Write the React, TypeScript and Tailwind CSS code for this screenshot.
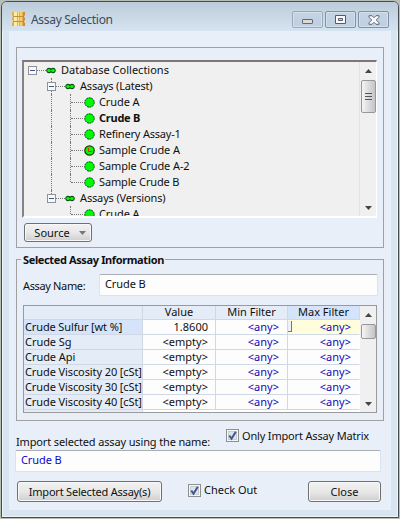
import React from "react";

const dotsH = "border-t border-dotted border-[#777]";
const dotsV = "border-l border-dotted border-[#777]";

function Minus() {
  return (
    <svg width="9" height="9" className="shrink-0" shapeRendering="crispEdges">
      <rect x="0.5" y="0.5" width="8" height="8" fill="#f8f8f8" stroke="#929292" />
      <rect x="2" y="4" width="5" height="1" fill="#3b56a0" />
    </svg>
  );
}

function Pair() {
  return (
    <svg width="10" height="7" viewBox="0 0 10 7" className="shrink-0">
      <circle cx="3" cy="3.5" r="2.3" fill="#00f018" stroke="#003800" strokeWidth="1" />
      <circle cx="7" cy="3.5" r="2.3" fill="#00f018" stroke="#003800" strokeWidth="1" />
      <path d="M4 3.5h2" stroke="#00f018" strokeWidth="1.2" />
    </svg>
  );
}

function Dot({ clock }: { clock?: boolean }) {
  return (
    <svg width="11" height="11" viewBox="0 0 11 11" className="shrink-0">
      <circle
        cx="5.5"
        cy="5.5"
        r="4.7"
        fill="#00fa08"
        stroke={clock ? "#234008" : "#064606"}
        strokeWidth={clock ? 1.3 : 1}
        strokeDasharray={clock ? undefined : "2 .6"}
      />
      {clock && <path d="M4 3h1v3h3v1H4z" fill="#f02800" shapeRendering="crispEdges" />}
    </svg>
  );
}

function Parent({ name, level, last, w }: { name: string; level: number; last?: boolean; w: string }) {
  return (
    <div className={"flex h-4 shrink-0 items-center " + (level ? "pl-[22px]" : "pl-[3px]")}>
      <div className="flex h-4 w-[9px] flex-col items-center">
        <div className={"h-[4px] " + (level ? dotsV : "")} />
        <Minus />
        <div className={"h-[3px] " + (level && !last ? dotsV : "")} />
      </div>
      <div className={"w-[9px] " + dotsH} />
      <Pair />
      <span className={"ml-[5px] " + w}>{name}</span>
    </div>
  );
}

function Leaf({ name, bold, clock, last, end, w }: { name: string; bold?: boolean; clock?: boolean; last?: boolean; end?: boolean; w: string }) {
  return (
    <div className="flex h-4 shrink-0 pl-[26px]">
      <div className={"w-[19px] " + (end ? "" : dotsV)} />
      <div className={(last ? "h-2 " : "h-4 ") + dotsV} />
      <div className={"mt-2 w-[12px] " + dotsH} />
      <div className="ml-px mt-[3px]"><Dot clock={clock} /></div>
      <span className={"ml-[4px] " + (bold ? "font-bold " : "") + w}>{name}</span>
    </div>
  );
}

function Arrow({ up }: { up?: boolean }) {
  return (
    <svg width="7" height="4" viewBox="0 0 7 4" className="block">
      <path d={up ? "M3.5 0L7 4H0z" : "M0 0h7L3.5 4z"} fill="#444" />
    </svg>
  );
}

function Check() {
  return (
    <svg width="13" height="13" viewBox="0 0 13 13" className="shrink-0">
      <rect x="0.5" y="0.5" width="12" height="12" fill="#f7f7f7" stroke="#8e8f8f" />
      <rect x="2.5" y="2.5" width="8" height="8" fill="#dfe3e8" stroke="#c6ccd3" />
      <path d="M3.3 6.5L5.5 9.7L9.8 2.8" fill="none" stroke="#40568f" strokeWidth="2" />
    </svg>
  );
}

const button = "flex items-center justify-center rounded-[3px] border border-[#707070] bg-linear-to-b from-[#f2f2f2] from-0% via-[#e8e8e8] via-50% to-[#cfcfcf] shadow-[inset_0_0_0_1px_#f8f8f8]";
const caption = "flex h-[17px] w-[31px] items-center justify-center rounded-[2px] border bg-linear-to-b from-[#c5d3e2] to-[#bfd0e2] shadow-[inset_0_0_0_1px_#d3e0ee]";
const field = "flex items-center rounded-[2px] border border-[#dbe2eb] border-t-[#abadb3] bg-[#fdfdfe]";
const cell = "border-b border-r border-[#d0d7e5]";

const rows = [
  ["Crude Sulfur [wt %]", "tracking-[-0.13px]"],
  ["Crude Sg", "tracking-[-0.05px]"],
  ["Crude Api", "tracking-[-0.05px]"],
  ["Crude Viscosity 20 [cSt]", "tracking-[-0.1px]"],
  ["Crude Viscosity 30 [cSt]", "tracking-[-0.1px]"],
  ["Crude Viscosity 40 [cSt]", "tracking-[-0.1px]"],
];

export default function App() {
  return (
    <div className="h-[519px] w-[400px] overflow-hidden bg-[#b8bdb5] pr-px pb-[2px] pl-px pt-px font-['Noto_Sans','Open_Sans',sans-serif] text-[11px] leading-4 whitespace-nowrap text-[#101010]">
      <div className="flex h-[517px] w-[398px] flex-col rounded-t-[6px] border border-[#454b50] bg-[#d8e5f1] shadow-[inset_0_0_0_1px_#edf5fb]">
        <div className="flex h-[29px] shrink-0 rounded-t-[5px] bg-linear-to-b from-[#bdccda] to-[#d6e4f1] pl-[10px]">
          <svg width="13" height="14" viewBox="0 0 13 14" className="mt-[10px]">
            <path d="M0 0h13v3l-1 1v1l1 1v2l-1 1v1l1 1v3H0v-3l1-1V9L0 8V6l1-1V4L0 3z" fill="#e3ae4c" />
            <path d="M2 0h3v14H2z" fill="#ffeb9c" />
            <path d="M8 0h2v14H8z" fill="#f6cf6c" />
            <path d="M6 0h1v14H6z" fill="#f9dfa0" />
            <path d="M11 0h2v3l-1 1v1l1 1v2l-1 1v1l1 1v3h-2z" fill="#c88f38" />
            <path d="M1 4.5h11M1 9.5h11" stroke="#bd8834" strokeWidth=".9" />
          </svg>
          <span className="ml-[6px] mt-[10px] text-[12px] tracking-[-0.3px] text-[#3d4a59]">Assay Selection</span>
          <div className="ml-auto mr-[9px] mt-[9px] flex gap-[2px]">
            <div className={caption + " border-[#9aa8b8] pt-[4px]"}>
              <svg width="11" height="5"><rect x=".5" y=".5" width="10" height="4" rx=".5" fill="#dedbd5" stroke="#666975" /></svg>
            </div>
            <div className={caption + " border-[#8090ab]"}>
              <svg width="11" height="9" fill="#fafafa" stroke="#525b70"><path d="M.5.5h10v8H.5z" /><path d="M3.5 3.5h4v2h-4z" fill="#c5d3e2" /></svg>
            </div>
            <div className={caption + " border-[#8090ab]"}>
              <svg width="12" height="10" viewBox="0 0 12 10"><path d="M1 .7h3l2 2 2-2h3v1.5L8.3 5 11 7.8v1.5H8l-2-2-2 2H1V7.8L3.7 5 1 2.2z" fill="#f8f8f8" stroke="#525b70" strokeWidth=".9" /></svg>
            </div>
          </div>
        </div>

        <main className="mx-[7px] h-[479px] bg-[#e8eff9] px-[7px] pt-[16px]">
          <section className="flex h-[201px] w-[368px] flex-col border border-[#a0a0a0] px-[5px] pt-[12px]">
            <div className="flex h-[158px] w-[355px] border-t-2 border-r border-b-2 border-l-2 border-t-[#7c7777] border-r-white border-b-white border-l-[#858383] bg-[#f0f0f0]">
              <div className="flex min-w-0 flex-1 flex-col overflow-hidden pl-px">
                <Parent name="Database Collections" level={0} w="" />
                <Parent name="Assays (Latest)" level={1} w="tracking-[-0.2px]" />
                <Leaf name="Crude A" w="tracking-[-0.1px]" />
                <Leaf name="Crude B" bold w="tracking-[-0.25px]" />
                <Leaf name="Refinery Assay-1" w="tracking-[-0.2px]" />
                <Leaf name="Sample Crude A" clock w="tracking-[-0.1px]" />
                <Leaf name="Sample Crude A-2" w="tracking-[-0.1px]" />
                <Leaf name="Sample Crude B" last w="tracking-[-0.15px]" />
                <Parent name="Assays (Versions)" level={1} last w="tracking-[-0.15px]" />
                <Leaf name="Crude A" last end w="tracking-[-0.1px]" />
              </div>
              <div className="flex w-[17px] flex-col items-center border-l border-[#e2e2e2] bg-[#f0f0f0]">
                <div className="mt-[7px]"><Arrow up /></div>
                <div className="mt-[7px] flex h-[33px] w-[15px] flex-col items-center justify-center gap-[2px] rounded-[2px] border border-[#979797] bg-linear-to-r from-[#f5f5f5] to-[#c4c4c9]">
                  <div className="h-px w-[7px] bg-[#555]" />
                  <div className="h-px w-[7px] bg-[#555]" />
                  <div className="h-px w-[7px] bg-[#555]" />
                </div>
                <div className="mt-auto mb-[6px]"><Arrow /></div>
              </div>
            </div>
            <div className={button + " ml-[2px] mt-[5px] h-[19px] w-[68px] pl-[4px]"}>
              <span className="mr-[9px]">Source</span>
              <svg width="7" height="4"><path d="M0 0h7L3.5 4z" fill="#777" /></svg>
            </div>
          </section>

          <section className="mt-[5px] flex h-[168px] w-[368px] flex-col">
            <div className="flex h-[13px] items-center">
              <div className="h-[7px] w-[5px] self-end border-t border-l border-[#a0a0a0]" />
              <h2 className="ml-[2px] mr-px w-[141px] text-[11px] font-bold leading-[13px] tracking-[-0.37px]">Selected Assay Information</h2>
              <div className="h-[7px] flex-1 self-end border-t border-r border-[#a0a0a0]" />
            </div>
            <div className="flex flex-1 flex-col border-x border-b border-[#a0a0a0] pl-[6px] pt-[8px]">
              <div className="flex h-[22px]">
                <label className="mt-[4px] w-[76px] tracking-[-0.35px]">Assay Name:</label>
                <div className={field + " h-[22px] w-[279px] pb-[2px] pl-[5px] tracking-[-0.1px]"}>Crude B</div>
              </div>
              <div className="mt-[9px] flex h-[108px] w-[354px] overflow-hidden border border-[#9a9a9a] bg-white">
                <div className="w-[336px]">
                  <div className="grid h-[14px] grid-cols-[119px_73px_72px_72px] grid-rows-[14px] bg-[#e4ecf7] text-center leading-[12px]">
                    <div className={cell} />
                    <div className={cell}>Value</div>
                    <div className={cell}>Min Filter</div>
                    <div className={cell + " bg-[#d5e4fa]"}>Max Filter</div>
                  </div>
                  {rows.map(([name, w], i) => (
                    <div key={name} className="grid h-[15px] grid-cols-[119px_73px_72px_72px] grid-rows-[15px] bg-[#fdfdfe] text-right leading-[13px]">
                      <div className={cell + " pl-px text-left " + w + (i ? " bg-[#e4ecf7]" : " bg-[#d5e4fa]")}>{name}</div>
                      <div className={cell + " pr-[7px]"}>{i ? "<empty>" : "1.8600"}</div>
                      <div className={cell + " pr-[8px] text-[#1008b8]"}>&lt;any&gt;</div>
                      <div className={cell + " flex justify-between border-r-transparent pr-[8px] text-[#1008b8]" + (i ? "" : " bg-[#fffddc]")}>
                        <span className={i ? "" : "mt-px h-[11px] w-[4px] border-r border-b border-[#777] bg-[#edf0f5]"} />
                        <span>&lt;any&gt;</span>
                      </div>
                    </div>
                  ))}
                  <div className="h-4 w-[119px] border-r border-[#d0d7e5] bg-[#e4ecf7]" />
                </div>
                <div className="flex w-[16px] flex-col items-center bg-[#f0f0f0]">
                  <div className="mt-[7px]"><Arrow up /></div>
                  <div className="mt-[7px] h-[15px] w-[15px] shrink-0 rounded-[2px] border border-[#979797] bg-linear-to-r from-[#f5f5f5] to-[#c4c4c9]" />
                  <div className="mt-auto mb-[6px]"><Arrow /></div>
                </div>
              </div>
            </div>
          </section>

          <div className="flex h-[29px] pt-[8px]">
            <span className="mt-[5px] w-[210px] tracking-[-0.14px]">Import selected assay using the name:</span>
            <Check />
            <span className="-mt-px ml-[3px] tracking-[-0.17px]">Only Import Assay Matrix</span>
          </div>
          <div className={field + " -ml-px h-[22px] w-[366px] pl-[5px] pb-[2px] tracking-[-0.1px] text-[#1008c8]"}>Crude B</div>
          <div className="mt-[9px] flex h-[21px] w-[365px] items-start pl-px">
            <div className={button + " h-[21px] w-[145px] tracking-[-0.2px]"}>Import Selected Assay(s)</div>
            <div className="ml-[26px] mt-[3px] flex">
              <Check />
              <span className="-mt-[2px] ml-[3px]">Check Out</span>
            </div>
            <div className={button + " ml-auto h-[21px] w-[73px]"}>Close</div>
          </div>
        </main>
      </div>
    </div>
  );
}
